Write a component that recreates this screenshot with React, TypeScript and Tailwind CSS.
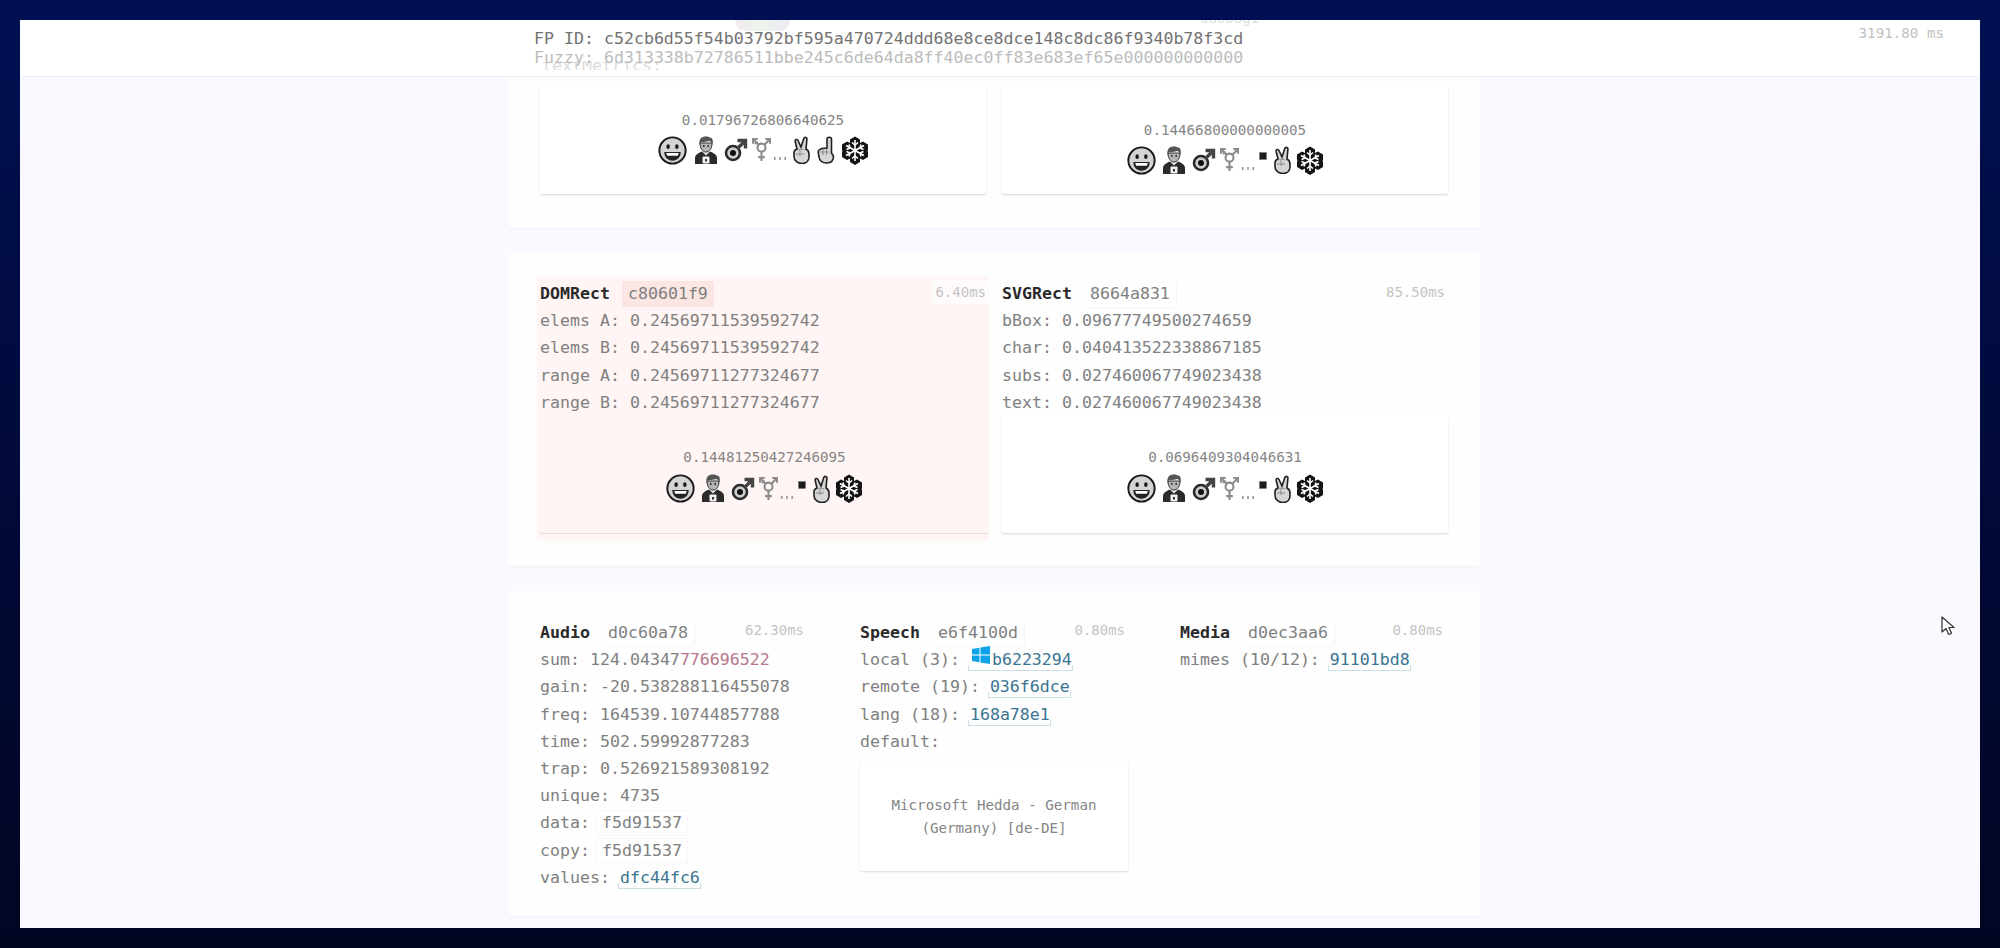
import type { ReactNode } from 'react';

function Smile({ className = '' }: { className?: string }) {
  return (
    <svg viewBox="0 0 30 30" className={`w-[29px] h-[29px] shrink-0 ${className}`}>
      <circle cx="15" cy="15" r="13.6" fill="#d4d4d4" stroke="#1a1a1a" strokeWidth="2" />
      <ellipse cx="10.5" cy="11" rx="1.8" ry="2.4" fill="#1a1a1a" />
      <ellipse cx="19.5" cy="11" rx="1.8" ry="2.4" fill="#1a1a1a" />
      <path d="M6.5 16.5h17c0 5-3.5 9-8.500 9s-8.500-4-8.500-9z" fill="#222" />
      <path d="M8.500 17.500h13l-1 3h-11z" fill="#fff" />
    </svg>
  );
}

function Man({ className = '' }: { className?: string }) {
  return (
    <svg viewBox="0 0 24 29" className={`w-[24px] h-[29px] shrink-0 ${className}`}>
      <path d="M1 28v-6c0-3 3-5 7-6.500h8c4 1.500 7 3.500 7 6.500v6z" fill="#2b2b2b" />
      <path d="M8 15.500l4 4 4-4v-1H8z" fill="#e8e8e8" />
      <rect x="8.500" y="20.500" width="7" height="7" rx="1" fill="#f2f2f2" />
      <rect x="11" y="23" width="2" height="2.500" fill="#333" />
      <path d="M6 7c0 5.500 2.500 9 6 9s6-3.500 6-9z" fill="#b5b5b5" stroke="#333" strokeWidth="1" />
      <path d="M5.500 9c-1-6 2-8.500 6.500-8.500 2 0 3 .5 4 1 2.500 0 3.500 3.500 2.500 7.500-.5-2-1.500-3.500-3.500-4-3 1-6 1.500-8 1z" fill="#555" />
      <circle cx="9.800" cy="10" r=".9" fill="#222" />
      <circle cx="14.200" cy="10" r=".9" fill="#222" />
    </svg>
  );
}

function MaleSign({ className = '' }: { className?: string }) {
  return (
    <svg viewBox="0 0 24 24" className={`w-[24px] h-[24px] shrink-0 ${className}`}>
      <circle cx="9" cy="15" r="7" fill="#cfcfcf" stroke="#2a2a2a" strokeWidth="2.600" />
      <circle cx="9" cy="15" r="3" fill="#111" />
      <path d="M13.500 10.500L20 4M13.500 2.500h8V10.500" fill="none" stroke="#444" strokeWidth="3.400" />
    </svg>
  );
}

function TransSign({ className = '' }: { className?: string }) {
  return (
    <svg viewBox="0 0 20 25" className={`w-[19px] h-[24px] shrink-0 ${className}`}>
      <g fill="none" stroke="#8c8c8c" strokeWidth="2.200">
        <circle cx="10" cy="10" r="4.200" />
        <path d="M10 14v10M6.500 20h7M7 7L2 2M13 7l5-5M1 6V1h5M14 1h5v5M3 6l3-2" />
      </g>
    </svg>
  );
}

function Dots({ className = '' }: { className?: string }) {
  return (
    <svg viewBox="0 0 14 6" className={`w-[14px] h-[6px] shrink-0 self-end mb-[4px] ${className}`}>
      <rect x="1" y="2" width="1.600" height="3" fill="#999" />
      <rect x="6.200" y="2" width="1.600" height="3" fill="#999" />
      <rect x="11.400" y="2" width="1.600" height="3" fill="#999" />
    </svg>
  );
}

function SquareMark({ className = '' }: { className?: string }) {
  return (
    <svg viewBox="0 0 8 8" className={`w-[8px] h-[8px] shrink-0 self-start mt-[7px] ${className}`}>
      <rect x="0.500" y="0.500" width="7" height="7" fill="#1c1c1c" stroke="#777" strokeWidth=".6" />
    </svg>
  );
}

function Victory({ className = '' }: { className?: string }) {
  return (
    <svg viewBox="0 0 18 28" className={`w-[18px] h-[28px] shrink-0 ${className}`}>
      <path
        d="M5 13L3.200 5.500c-.4-2 2-2.800 2.800-1L9 11l2.800-8.500c.7-2 3.500-1.200 3.100.8L14 13c2 1 3 2.500 3 5v3c0 4-3 6.500-7 6.500s-8-2.500-8-7v-4c0-1.500 1.500-2.800 3-3.500z"
        fill="#d6d6d6"
        stroke="#1f1f1f"
        strokeWidth="1.600"
      />
      <path d="M5 14c2-1 5-1 7 0M4 18h8M8 14v6" fill="none" stroke="#8a8a8a" strokeWidth="1" />
    </svg>
  );
}

function IndexUp({ className = '' }: { className?: string }) {
  return (
    <svg viewBox="0 0 18 28" className={`w-[18px] h-[28px] shrink-0 ${className}`}>
      <path
        d="M10 12V3c0-2.400 4.500-2.400 4.500 0v14l2 3c0 4-2 7-6.500 7C6 27 2.500 25 2 21l-.8-5c0-2 2-3 4-3.500z"
        fill="#d6d6d6"
        stroke="#1f1f1f"
        strokeWidth="1.600"
      />
      <path d="M3 16h9M6 13v6M9.500 13v6" fill="none" stroke="#8a8a8a" strokeWidth="1" />
    </svg>
  );
}

function Snowflake({ className = '' }: { className?: string }) {
  return (
    <svg viewBox="0 0 28 29" className={`w-[28px] h-[29px] shrink-0 ${className}`}>
      <path
        d="M14 .5l5 3v3.500l3-1.500 5 3v6L26 15l1 .5v5.500l-5 3-3-1.500V26l-5 3-5-3v-3.500L6 24l-5-3v-5.500L2 15l-1-.5v-6l5-3 3 1.500V3.500z"
        fill="#141414"
      />
      <g stroke="#fff" strokeWidth="1.600" fill="none">
        <path d="M14 4v21M5 9.500l18 10M23 9.500l-18 10" />
        <path d="M11 6.500l3 2.500 3-2.500M11 22.500l3-2.500 3 2.500M5.500 13.500l3.500-1.500-1-3.500M22.500 13.500l-3.500-1.500 1-3.500M5.500 15.500l3.500 1.500-1 3.500M22.500 15.500l-3.500 1.500 1 3.500" />
      </g>
    </svg>
  );
}

function EmojiRow({ variant }: { variant: 'point' | 'square' }) {
  return (
    <div className="flex items-center justify-center h-[30px]">
      <Smile />
      <Man className={variant === 'point' ? 'ml-[7px]' : 'ml-[6px]'} />
      <MaleSign className="ml-[6px]" />
      <TransSign className="ml-[4px]" />
      <Dots className="ml-[2px]" />
      {variant === 'square' ? (
        <>
          <SquareMark className="ml-[4px]" />
          <Victory className="ml-[6px]" />
          <Snowflake className="ml-[5px]" />
        </>
      ) : (
        <>
          <Victory className="ml-[5px]" />
          <IndexUp className="ml-[7px]" />
          <Snowflake className="ml-[6px]" />
        </>
      )}
    </div>
  );
}

function Hash({ children, pink = false }: { children: ReactNode; pink?: boolean }) {
  return (
    <span
      className={`inline-block h-[26px] leading-[26px] px-[6px] ml-[12px] rounded-[2px] ${
        pink ? 'bg-[#fbe6e3]' : 'shadow-[1px_1px_1px_#f4f4f7]'
      }`}
    >
      {children}
    </span>
  );
}

function InlineHash({ children }: { children: ReactNode }) {
  return (
    <span className="inline-block leading-[24px] px-[5px] -ml-[3px] shadow-[0_0_0_1px_#f8f8fa]">{children}</span>
  );
}

function Link({ children, className = '' }: { children: ReactNode; className?: string }) {
  return (
    <span
      className={`relative text-[#3a7591] after:absolute after:-left-[2px] after:-right-[1px] after:-bottom-[2px] after:h-[6px] after:border after:border-t-0 after:border-[#cddfe6] ${className}`}
    >
      {children}
    </span>
  );
}

function Row({ children }: { children: ReactNode }) {
  return <div className="h-[27.2px] leading-[27.2px] whitespace-nowrap">{children}</div>;
}

function Title({ name, children }: { name: string; children: ReactNode }) {
  return (
    <div className="h-[27.2px] leading-[27.2px] whitespace-nowrap">
      <b className="font-bold text-[#2a2a2a]">{name}</b>
      {children}
    </div>
  );
}

function Ms({ children, className = 'top-[-1px] right-[3px]' }: { children: ReactNode; className?: string }) {
  return (
    <span className={`absolute text-[14px] leading-[24px] text-[#c4c4c4] ${className}`}>
      {children}
    </span>
  );
}

function HashCard({ value, variant, tall, gap = 'mb-[5px]', tint = false }: { value: string; variant: 'point' | 'square'; tall?: string; gap?: string; tint?: boolean }) {
  return (
    <div
      className={`flex flex-col items-center text-center text-[14.200px] leading-[20px] text-[#858585] rounded-[2px] ${
        tint ? 'bg-[#fff5f4] shadow-[0_1px_0_#e6dcdb]' : 'bg-white shadow-[0_1px_2px_#d8d8dc]'
      } ${tall}`}
    >
      <div className={gap}>{value}</div>
      <EmojiRow variant={variant} />
    </div>
  );
}

function WindowsLogo() {
  return (
    <svg viewBox="0 0 18 18" className="absolute left-[2px] -top-[4px] w-[18px] h-[18px]">
      <path d="M0 3l7.500-1.200v6.700H0zM8.500 1.600L18 0v8.500H8.500zM0 9.500h7.500v6.700L0 15zM8.500 9.500H18V18l-9.500-1.600z" fill="#0ea2e8" />
    </svg>
  );
}

export default function App() {
  return (
    <div className="h-[948px] overflow-hidden bg-gradient-to-b from-[#001053] to-[#020522] p-[20px] font-['DejaVu_Sans_Mono','Liberation_Mono',monospace] text-[16.600px] text-[#808080]">
      <div className="relative h-[908px] overflow-hidden bg-[#f9f9ff]">
        <header className="relative h-[57px] bg-white border-b border-[#eeeef4] pl-[514px] overflow-hidden">
          <div className="absolute left-[715px] top-0 h-[11px] w-[55px] rounded-b-[14px] opacity-40 bg-gradient-to-r from-[#e3cdd8] via-[#cfe3cf] to-[#d6c8e6]" />
          <div className="absolute left-[1180px] -top-[12px] text-[14px] text-[#dedede]">ua6b8g1</div>
          <div className="absolute left-[522px] top-[41px] h-[9px] overflow-hidden text-[#dcdcdc] leading-[9px]">textMetrics:</div>
          <div className="absolute right-[36px] top-0 pt-[1px] text-[14.200px] leading-[24px] text-[#c2c2c2]">3191.80 ms</div>
          <div className="relative pt-[9px] whitespace-nowrap leading-[19px] text-[#727272]">
            FP ID: c52cb6d55f54b03792bf595a470724ddd68e8ce8dce148c8dc86f9340b78f3cd
          </div>
          <div className="relative whitespace-nowrap leading-[19px] text-[#bcbcbc]">
            Fuzzy: 6d313338b72786511bbe245c6de64da8ff40ec0ff83e683ef65e000000000000
          </div>
        </header>

        <main className="flex flex-col items-center gap-[25px]">
          {/* textMetrics block, top is under the header */}
          <section className="w-[972px] -ml-[12px] h-[151px] bg-[#fefefe] rounded-b-[3px] shadow-[0_1px_1px_#f1f1f5] px-[32px] pt-[7px] grid grid-cols-[446px_446px] gap-x-[16px]">
            <HashCard value="0.01796726806640625" variant="point" tall="h-[110px] pt-[26px]" />
            <HashCard value="0.14466800000000005" variant="square" tall="h-[110px] pt-[36px]" />
          </section>

          <section className="w-[972px] -ml-[12px] h-[313px] bg-[#fefefe] rounded-[3px] shadow-[0_1px_1px_#f1f1f5] px-[32px] pt-[27px] grid grid-cols-[446px_446px] gap-x-[16px]">
            <div className="relative h-[258px] bg-[#fff5f4] shadow-[0_0_0_3px_#fff5f4]">
              <Title name="DOMRect">
                <Hash pink>c80601f9</Hash>
              </Title>
              <Ms className="top-0 -right-[3px] bg-[#fffbfb] px-[3px]">6.40ms</Ms>
              <Row>elems A: 0.24569711539592742</Row>
              <Row>elems B: 0.24569711539592742</Row>
              <Row>range A: 0.24569711277324677</Row>
              <Row>range B: 0.24569711277324677</Row>
              <HashCard tint value="0.14481250427246095" variant="square" gap="mb-[7px]" tall="h-[117px] pt-[31px] -mr-[3px]" />
            </div>
            <div className="relative h-[258px]">
              <Title name="SVGRect">
                <Hash>8664a831</Hash>
              </Title>
              <Ms className="top-0 right-[3px]">85.50ms</Ms>
              <Row>bBox: 0.09677749500274659</Row>
              <Row>char: 0.040413522338867185</Row>
              <Row>subs: 0.027460067749023438</Row>
              <Row>text: 0.027460067749023438</Row>
              <HashCard value="0.0696409304046631" variant="square" gap="mb-[7px]" tall="h-[117px] pt-[31px]" />
            </div>
          </section>

          <section className="w-[972px] -ml-[12px] h-[325px] bg-[#fefefe] rounded-[3px] shadow-[0_1px_1px_#f1f1f5] px-[32px] pt-[28px] grid grid-cols-[268px_268px_268px] gap-x-[52px] content-start">
            <div className="relative">
              <Title name="Audio">
                <Hash>d0c60a78</Hash>
              </Title>
              <Ms className="top-[-1px] right-[4px]">62.30ms</Ms>
              <Row>
                sum: 124.04347<span className="text-[#b8778c]">776696522</span>
              </Row>
              <Row>gain: -20.538288116455078</Row>
              <Row>freq: 164539.10744857788</Row>
              <Row>time: 502.59992877283</Row>
              <Row>trap: 0.526921589308192</Row>
              <Row>unique: 4735</Row>
              <Row>
                data: <InlineHash>f5d91537</InlineHash>
              </Row>
              <Row>
                copy: <InlineHash>f5d91537</InlineHash>
              </Row>
              <Row>
                values: <Link>dfc44fc6</Link>
              </Row>
            </div>
            <div className="relative">
              <Title name="Speech">
                <Hash>e6f4100d</Hash>
              </Title>
              <Ms>0.80ms</Ms>
              <Row>
                local (3):{' '}
                <Link className="pl-[22px]">
                  <WindowsLogo />
                  b6223294
                </Link>
              </Row>
              <Row>
                remote (19): <Link>036f6dce</Link>
              </Row>
              <Row>
                lang (18): <Link>168a78e1</Link>
              </Row>
              <Row>default:</Row>
              <div className="mt-[8px] h-[108px] bg-white rounded-[2px] shadow-[0_1px_2px_#d8d8dc] flex items-center justify-center text-center text-[14.200px] leading-[23px] text-[#858585]">
                <div>
                  Microsoft Hedda - German
                  <br />
                  (Germany) [de-DE]
                </div>
              </div>
            </div>
            <div className="relative">
              <Title name="Media">
                <Hash>d0ec3aa6</Hash>
              </Title>
              <Ms className="top-[-1px] right-[5px]">0.80ms</Ms>
              <Row>
                mimes (10/12): <Link>91101bd8</Link>
              </Row>
            </div>
          </section>
        </main>

        <svg viewBox="0 0 14 20" className="absolute left-[1921px] top-[596px] w-[14px] h-[20px]">
          <path d="M1 1v15l4-3.500 2.800 6 2.800-1.300-2.800-5.700H13z" fill="#fff" stroke="#333" strokeWidth="1.200" strokeLinejoin="round" />
        </svg>
      </div>
    </div>
  );
}
